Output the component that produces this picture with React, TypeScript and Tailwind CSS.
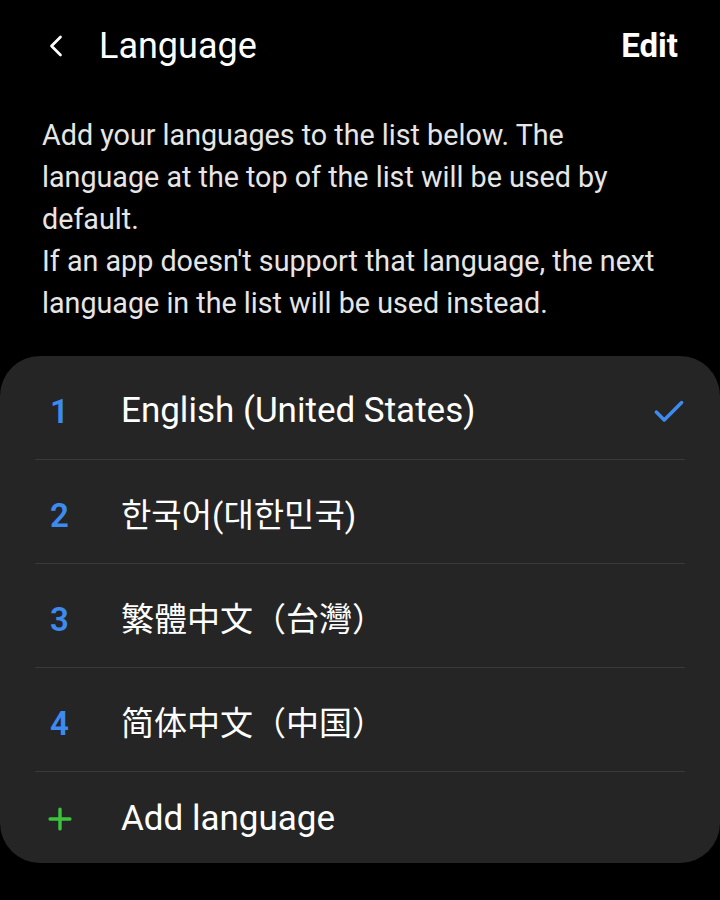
import { Check, ChevronLeft, Plus } from "lucide-react";

const languages = [
  { id: 1, name: "English (United States)", selected: true, cjk: false },
  { id: 2, name: "한국어(대한민국)", cjk: true },
  { id: 3, name: "繁體中文（台灣）", cjk: true },
  { id: 4, name: "简体中文（中国）", cjk: true },
];

export default function App() {
  return (
    <div className="min-h-[900px] w-[720px] bg-black text-white font-['Roboto','Noto_Sans_CJK_KR','Noto_Sans_CJK_TC',sans-serif]">
      {/* header */}
      <div className="flex h-[92px] items-center pl-[38px] pr-[42px]">
        <ChevronLeft className="h-[36px] w-[36px] text-white" strokeWidth={1.8} />
        <h1 className="ml-[25px] text-[36px] font-normal">Language</h1>
        <button type="button" className="ml-auto text-[33px] font-bold">
          Edit
        </button>
      </div>

      <p className="mt-[22px] px-[42px] text-[28.7px] leading-[42px] text-[#e6e6e6]">
        Add your languages to the list below. The
        <br />
        language at the top of the list will be used by
        <br />
        default.
        <br />
        If an app doesn't support that language, the next
        <br />
        language in the list will be used instead.
      </p>

      <div className="mt-[32px] rounded-[40px] bg-[#252525] pb-[3px]">
        {languages.map((lang) => (
          <div key={lang.id}>
            <div className="flex h-[103px] items-center px-[35px] pt-[8px]">
              <span className="w-[86px] pl-[15px] text-[33px] font-semibold text-[#3e8bf0]">{lang.id}</span>
              <span className={lang.cjk ? "text-[33px] text-white" : "text-[35px] text-white"}>{lang.name}</span>
              {lang.selected && (
                <Check className="ml-auto mr-[-3px] h-[38px] w-[38px] text-[#3e8bf0]" strokeWidth={2.2} />
              )}
            </div>
            <div className="mx-[35px] h-px bg-[#3a3a3a]" />
          </div>
        ))}
        <div className="flex h-[88px] items-center px-[35px] pt-[6px]">
          <span className="w-[86px] pl-[8px]">
            <Plus className="h-[34px] w-[34px] text-[#3cc33c]" strokeWidth={2.4} />
          </span>
          <span className="text-[35px] text-white">Add language</span>
        </div>
      </div>
    </div>
  );
}
